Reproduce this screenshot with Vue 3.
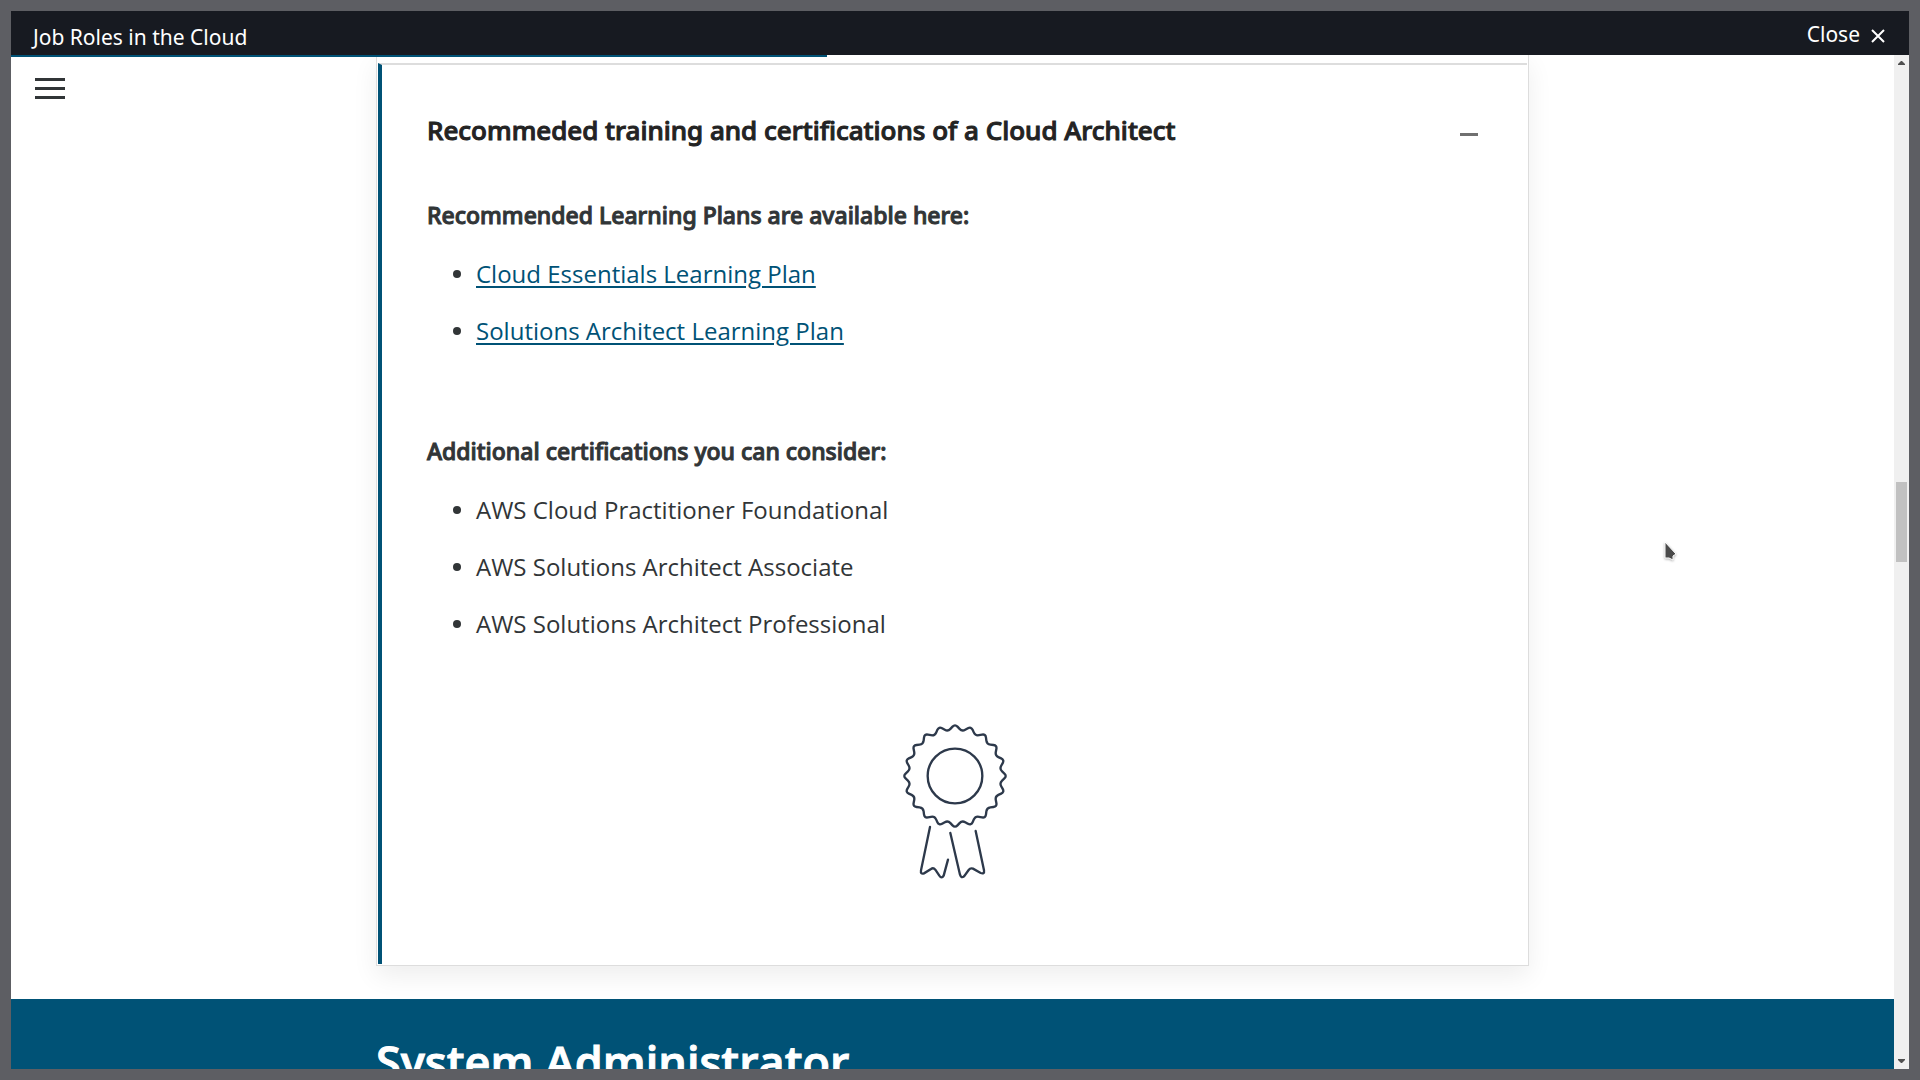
<script setup>
const plans = ['Cloud Essentials Learning Plan', 'Solutions Architect Learning Plan']
const certifications = [
  'AWS Cloud Practitioner Foundational',
  'AWS Solutions Architect Associate',
  'AWS Solutions Architect Professional',
]
const progress = 43.35

// Scalloped rosette: 20 tips, each corner rounded by curving between edge points.
const corners = Array.from({ length: 40 }, (_, i) => {
  const radius = i % 2 ? 135 : 156
  const angle = (i * Math.PI) / 20
  return [195 + radius * Math.sin(angle), 198 - radius * Math.cos(angle)]
})
const mix = (a, b, t) => [a[0] + (b[0] - a[0]) * t, a[1] + (b[1] - a[1]) * t]
const fmt = (p) => p.map((n) => n.toFixed(1)).join(' ')
const rosette =
  corners
    .map((c, i) => {
      const start = mix(c, corners[(i + 39) % 40], 0.35)
      const end = mix(c, corners[(i + 1) % 40], 0.35)
      return `${i ? 'L' : 'M'}${fmt(start)}Q${fmt(c)} ${fmt(end)}`
    })
    .join('') + 'Z'
</script>

<template>
  <div class="frame">
    <div class="window">
      <header class="topbar">
        <span class="course">Job Roles in the Cloud</span>
        <button class="close" type="button">
          Close
          <svg class="close-icon" viewBox="0 0 14 14" aria-hidden="true">
            <path d="M1 1L13 13M13 1L1 13" />
          </svg>
        </button>
      </header>

      <div class="viewport">
        <main class="page">
          <div class="progress" :style="{ width: progress + '%' }"></div>
          <button class="menu" type="button" aria-label="Open menu">
            <span></span><span></span><span></span>
          </button>

          <div class="accordion">
            <section class="item">
              <div class="item-head">
                <h2>Recommeded training and certifications of a Cloud Architect</h2>
                <button class="toggle" type="button" aria-label="Collapse"><span></span></button>
              </div>
              <h3>Recommended Learning Plans are available here:</h3>
              <ul>
                <li v-for="plan in plans" :key="plan"><a href="#">{{ plan }}</a></li>
              </ul>
              <h3 class="second">Additional certifications you can consider:</h3>
              <ul>
                <li v-for="cert in certifications" :key="cert">{{ cert }}</li>
              </ul>
              <svg class="badge" viewBox="30 39 330 474" aria-hidden="true">
                <path :d="rosette" />
                <circle cx="195" cy="198" r="82" />
                <path d="M120 351L93 481Q91 494 102 490L123 477Q130 472 136 479L148 497Q155 507 161 497L174 449" />
                <path d="M181 369L210 494Q214 506 222 499L236 480Q241 473 249 476L272 489Q284 493 282 481L257 363" />
              </svg>
            </section>
          </div>

          <section class="banner">
            <h1>System Administrator</h1>
          </section>
        </main>

        <div class="scrollbar" aria-hidden="true">
          <svg viewBox="0 0 7 4"><path d="M0 4V3L3 0H4L7 3V4Z" /></svg>
          <div class="track"><div class="thumb"></div></div>
          <svg viewBox="0 0 7 4"><path d="M0 0V1L3 4H4L7 1V0Z" /></svg>
        </div>
      </div>
    </div>

    <svg class="cursor" viewBox="0 0 16 24" aria-hidden="true">
      <path d="M2 2L13 14L10 16V20L6 18H2Z" />
    </svg>
  </div>
</template>

<style>
body {
  margin: 0;
}
</style>

<style scoped>
.frame {
  position: relative;
  box-sizing: border-box;
  height: 100vh;
  padding: 11px;
  background: #5d5e63;
  font-family: "Open Sans", "Noto Sans", sans-serif;
  color: #313537;
}
.window {
  display: flex;
  flex-direction: column;
  height: 100%;
  background: #fff;
  overflow: hidden;
}
.topbar {
  flex: none;
  display: flex;
  justify-content: space-between;
  height: 44px;
  padding: 0 24px 0 22px;
  background: #171a21;
  color: #fff;
  font-family: "Noto Sans", "Open Sans", sans-serif;
  font-size: 21px;
}
.course {
  line-height: 52px;
}
.close {
  display: flex;
  align-items: center;
  gap: 11px;
  height: 46px;
  padding: 0;
  border: 0;
  background: none;
  color: inherit;
  font: inherit;
}
.close-icon {
  width: 14px;
  height: 14px;
  margin-top: 4px;
  fill: none;
  stroke: #fff;
  stroke-width: 2;
}
.viewport {
  flex: 1;
  display: flex;
  min-height: 0;
}
.page {
  position: relative;
  flex: 1;
  display: flex;
  flex-direction: column;
  align-items: center;
  overflow: hidden;
}
.progress {
  position: absolute;
  top: 0;
  left: 0;
  height: 2px;
  background: #005276;
}
.menu {
  position: absolute;
  top: 23px;
  left: 24px;
  display: flex;
  flex-direction: column;
  gap: 6px;
  width: 30px;
  padding: 0;
  border: 0;
  background: none;
}
.menu span {
  height: 3px;
  background: #313537;
}
.accordion {
  flex: none;
  box-sizing: border-box;
  width: 100%;
  max-width: 1153px;
  padding: 8px 1px 1px;
  border: 1px solid #ddd;
  border-top: 0;
  box-shadow: 0 10px 24px rgba(0, 0, 0, 0.07);
}
.progress,
.menu {
  z-index: 1;
}
.item {
  display: flex;
  flex-direction: column;
  padding: 45px 45px 83px;
  border-top: 2px solid #ddd;
  border-left: 4px solid #005276;
}
.item-head {
  display: flex;
  align-items: center;
  justify-content: space-between;
  margin-bottom: 47px;
}
h1,
h2,
h3 {
  margin: 0;
}
h2,
h3 {
  font-family: "Noto Sans", "Open Sans", sans-serif;
  font-weight: 500;
  -webkit-text-stroke: 1px;
}
h2 {
  font-size: 26px;
  line-height: 40px;
  color: #232323;
}
h3 {
  font-size: 23px;
  line-height: 36px;
}
.second {
  margin-top: 84px;
}
.toggle {
  padding: 9px 4px 0;
  border: 0;
  background: none;
}
.toggle span {
  display: block;
  width: 18px;
  height: 3px;
  background: #707070;
}
ul {
  display: flex;
  flex-direction: column;
  gap: 21px;
  margin: 23px 0 0;
  padding: 0;
  list-style: none;
}
li {
  display: flex;
  align-items: center;
  gap: 15px;
  padding-left: 26px;
  font-size: 24px;
  line-height: 36px;
}
li::before {
  content: "";
  width: 8px;
  height: 8px;
  border-radius: 50%;
  background: #313537;
}
a {
  color: #005276;
  text-decoration-thickness: 2px;
  text-underline-offset: 3px;
}
.badge {
  align-self: center;
  width: 110px;
  height: 158px;
  margin-top: 81px;
  fill: none;
  stroke: #2d394b;
  stroke-width: 7;
  stroke-linecap: round;
}
.banner {
  flex: none;
  display: flex;
  justify-content: center;
  width: 100%;
  margin-top: 33px;
  background: #005276;
  position: relative;
}
h1 {
  width: 100%;
  max-width: 1153px;
  padding: 32px 0;
  font-size: 45px;
  font-weight: 600;
  line-height: 62px;
  color: #fff;
  -webkit-text-stroke: 1px;
}
.scrollbar {
  flex: none;
  display: flex;
  flex-direction: column;
  align-items: center;
  box-sizing: border-box;
  width: 15px;
  padding: 6px 0;
  background: #f0f0f0;
}
.scrollbar svg {
  width: 7px;
  height: 4px;
  fill: #505050;
}
.track {
  flex: 1;
  display: flex;
  flex-direction: column;
  width: 11px;
  padding-top: 417px;
}
.thumb {
  height: 80px;
  background: #c1c1c1;
}
.cursor {
  position: absolute;
  top: 540px;
  left: 1663px;
  width: 16px;
  height: 24px;
  fill: #4a4a4a;
  stroke: #fff;
  stroke-width: 1;
  filter: drop-shadow(0 1px 1px rgba(0, 0, 0, 0.3));
}
</style>
